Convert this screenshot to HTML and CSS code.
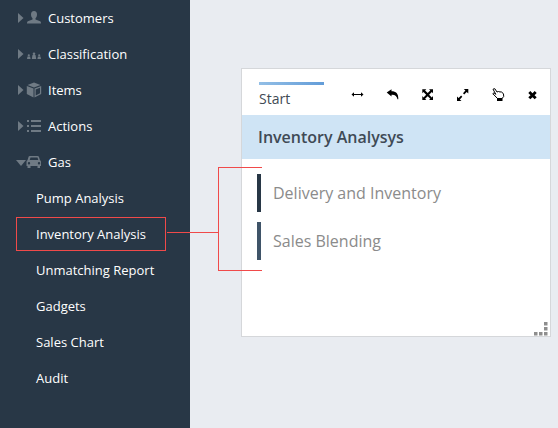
FILE: index.html
```html
<!DOCTYPE html>
<html lang="en">
<head>
<meta charset="utf-8">
<title>Inventory Analysis</title>
<link rel="stylesheet" href="styles.css">
</head>
<body>
<div class="app">
  <nav class="sidebar">
    <div class="row top">
      <svg class="caret" width="6" height="12" viewBox="0 0 6 12"><path d="M0 1l5.500 5L0 11z"/></svg>
      <svg class="ico" width="16" height="16" viewBox="0 0 16 16"><path d="M8 1c2 0 3 1.500 3 3.500 0 1.500-.6 3-1.500 3.700v1.300l4 1.500c1 .4 1.500 1 1.500 2.500H1c0-1.500.5-2.100 1.500-2.500l4-1.500V8.200C5.600 7.500 5 6 5 4.500 5 2.500 6 1 8 1z"/></svg>
      <span>Customers</span>
    </div>
    <div class="row top">
      <svg class="caret" width="6" height="12" viewBox="0 0 6 12"><path d="M0 1l5.500 5L0 11z"/></svg>
      <svg class="ico" width="16" height="16" viewBox="0 0 16 16"><circle cx="2.800" cy="9.300" r="1.100"/><path d="M1 13l.5-2.500h2.600l.5 2.500z"/><circle cx="8" cy="7.800" r="1.300"/><path d="M5.800 13l.7-4h3l.7 4z"/><circle cx="13.200" cy="9.300" r="1.100"/><path d="M11.400 13l.5-2.500h2.600l.5 2.500z"/></svg>
      <span>Classification</span>
    </div>
    <div class="row top">
      <svg class="caret" width="6" height="12" viewBox="0 0 6 12"><path d="M0 1l5.500 5L0 11z"/></svg>
      <svg class="ico" width="16" height="16" viewBox="0 0 16 16"><path d="M8 .5l6.500 2.500L8 5.500 1.500 3zM.8 4l6.700 2.600v8.900L.8 12zM8.500 6.600L15.200 4v8l-6.700 3.500zM9.700 7.400v6l4.300-2.200V5.700z" fill-rule="evenodd"/></svg>
      <span>Items</span>
    </div>
    <div class="row top">
      <svg class="caret" width="6" height="12" viewBox="0 0 6 12"><path d="M0 1l5.500 5L0 11z"/></svg>
      <svg class="ico" width="16" height="16" viewBox="0 0 16 16"><path d="M1 2h2v2H1zM5 2h10v2H5zM1 7h2v2H1zM5 7h10v2H5zM1 12h2v2H1zM5 12h10v2H5z"/></svg>
      <span>Actions</span>
    </div>
    <div class="row top">
      <svg class="caret open" width="10" height="6" viewBox="0 0 10 6"><path d="M0 0h10L5 6z"/></svg>
      <svg class="ico" width="16" height="16" viewBox="0 0 16 16"><path fill-rule="evenodd" d="M4.500 2h7c.8 0 1.300.4 1.500 1l1 3.200c.6.300 1 .8 1 1.500V12h-1v2h-2.500v-2h-7v2H1.500v-2H.5V7.700c0-.7.400-1.200 1-1.500L2.500 3c.2-.6.700-1 2-1zM4.500 3.500L3.700 6h8.600l-.8-2.500zM3 8a1.200 1.200 0 100 2.400A1.200 1.200 0 003 8zM13 8a1.200 1.200 0 100 2.400A1.200 1.200 0 0013 8z"/></svg>
      <span>Gas</span>
    </div>
    <div class="row sub">Pump Analysis</div>
    <div class="row sub">Inventory Analysis</div>
    <div class="row sub">Unmatching Report</div>
    <div class="row sub">Gadgets</div>
    <div class="row sub">Sales Chart</div>
    <div class="row sub">Audit</div>
  </nav>

  <main class="canvas">
    <section class="panel">
      <header class="toolbar">
        <div class="tab">Start</div>
        <div class="tools">
          <svg width="14" height="14" viewBox="0 0 14 14"><path d="M.5 6.500L3 4.300V6h7V4.300l2.500 2.200L10 8.700V7H3v1.700z"/></svg>
          <svg width="14" height="14" viewBox="0 0 14 14"><path d="M.7 4.500L5.500 1.300v2C10 3.300 12.500 5.500 12.300 11.300h-.8C11 8.500 9 6.500 5.500 6.800v1.700z"/></svg>
          <svg width="14" height="14" viewBox="0 0 14 14"><path d="M1.300 1.300h4L4.100 2.500 6.700 5.100 9.300 2.500 8 1.300h4v4l-1.200-1.300-2.700 2.700 2.700 2.700L12 8.100v4H8l1.300-1.300-2.600-2.600-2.600 2.600 1.200 1.300h-4v-4l1.200 1.300 2.700-2.700L2.500 4 1.300 5.300z"/></svg>
          <svg width="14" height="14" viewBox="0 0 14 14"><path d="M7.800 1h4.500v4.500L10.700 3.900 8.200 6.400 7 5.200 9.400 2.600zM1 13V8.500l1.600 1.600 2.500-2.500L6.300 8.800 3.800 11.400 5.500 13z"/></svg>
          <svg width="14" height="14" viewBox="0 0 14 14"><path class="hand" d="M2 1.200l1.800-.5L6 4l1.500-.5L9 4l1.500-.2L12.500 6l.2 2.500-1.700 2H6.500L1.800 5.700l1.200-.9 1.800 1.500z"/><path d="M6 10h5.500v3H6z"/></svg>
          <svg width="14" height="14" viewBox="0 0 14 14"><path d="M4.300 3l2.200 2.200L8.700 3l2 2-2.200 2.200 2.200 2.100-2 2-2.200-2.100-2.200 2.100-2-2 2.200-2.100L2.300 5z"/></svg>
        </div>
      </header>
      <h1 class="title">Inventory Analysys</h1>
      <ul class="list">
        <li class="item dark">Delivery and Inventory</li>
        <li class="item slate">Sales Blending</li>
      </ul>
      <svg class="grip" width="14" height="14" viewBox="0 0 14 14"><path d="M10 0h3.500v3.500H10zM10 5h3.500v3.500H10zM0 10h3.500v3.500H0zM5 10h3.500v3.500H5zM10 10h3.500v3.500H10z"/></svg>
    </section>
  </main>

  <div class="hl-box"></div>
  <div class="wire w-stem"></div>
  <div class="wire w-bracket"></div>
</div>
</body>
</html>
```

FILE: styles.css
```css
* { box-sizing: border-box; }
html, body { margin: 0; padding: 0; }
body { font-family: "Open Sans", sans-serif; }
.app {
  position: relative;
  width: 558px;
  height: 428px;
  display: flex;
  overflow: hidden;
  background: #e9ecf1;
}
.sidebar {
  width: 190px;
  background: #283746;
  color: #fff;
  font-size: 13px;
  display: flex;
  flex-direction: column;
}
.row {
  height: 36px;
  display: flex;
  align-items: center;
  flex: none;
}
.top { position: relative; padding-left: 48px; }
.sub { padding-left: 36px; }
.caret { position: absolute; left: 18px; top: 12px; fill: #6f7a84; }
.caret.open { left: 16px; top: 16px; }
.ico { position: absolute; left: 26px; top: 10px; fill: #6f7a84; }
.canvas {
  flex: 1;
  padding: 68px 7px 0 51px;
}
.panel {
  position: relative;
  height: 269px;
  background: #fff;
  border: 1px solid #d5d7da;
}
.toolbar {
  height: 46px;
  display: flex;
  padding: 13px 0 0 17px;
}
.tab {
  width: 65px;
  height: 33px;
  border-top: 3px solid;
  border-image: linear-gradient(90deg, #93bfe6, #629cd8) 1;
  font-size: 14px;
  color: #3f4a54;
  padding-top: 4px;
  line-height: 19px;
}
.tools {
  flex: 1;
  display: flex;
  gap: 21px;
  padding: 6px 0 0 27px;
  height: 26px;
}
.tools svg { fill: #000; display: block; flex: none; }
.tools .hand { fill: #fff; stroke: #000; stroke-width: 1; }
.title {
  margin: 0;
  height: 44px;
  background: #cfe4f5;
  font-size: 16px;
  font-weight: 600;
  line-height: 44px;
  padding-left: 16px;
  color: #3f4a55;
}
.list {
  list-style: none;
  margin: 0;
  padding: 15px 0 0 15px;
  display: flex;
  flex-direction: column;
  gap: 10px;
}
.item {
  height: 38px;
  line-height: 38px;
  border-left: 4px solid;
  padding-left: 12px;
  font-size: 16px;
  color: #8b8b8b;
}
.item.dark { border-color: #283746; }
.item.slate { border-color: #3f5468; }
.grip { position: absolute; right: 2px; bottom: 0; fill: #8e8e8e; }
.hl-box {
  position: absolute;
  left: 16px;
  top: 217px;
  width: 150px;
  height: 34px;
  border: 1px solid #f04a4a;
}
.wire { position: absolute; }
.w-stem {
  left: 167px;
  top: 232px;
  width: 52px;
  height: 1px;
  background: #f04a4a;
}
.w-bracket {
  left: 218px;
  top: 167px;
  width: 44px;
  height: 104px;
  border: 1px solid #f04a4a;
  border-right: 0;
}
```
